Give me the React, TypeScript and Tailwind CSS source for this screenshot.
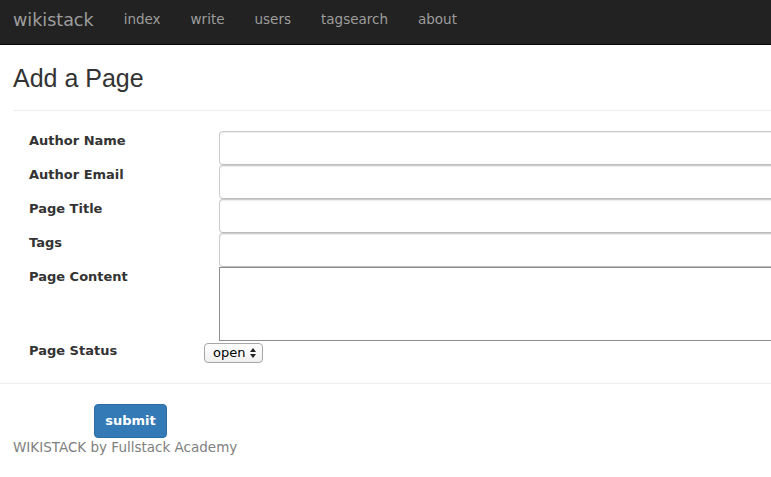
import React from "react";

const fields = ["Author Name", "Author Email", "Page Title", "Tags"];

export default function App() {
  const ui = { fontFamily: '"DejaVu Sans", "Lucida Grande", sans-serif' };
  return (
    <div className="w-[771px] h-[477px] overflow-hidden bg-white" style={ui}>
      {/* navbar */}
      <nav className="h-[45px] bg-[#222222] border-b border-[#080808] flex items-start pt-[7px] text-[#9d9d9d]">
        <span className="ml-[13px] text-[17.5px] mr-[30px]">wikistack</span>
        <div className="flex gap-[30px] text-[13.5px] pt-[2px]">
          <span>index</span>
          <span>write</span>
          <span>users</span>
          <span>tagsearch</span>
          <span>about</span>
        </div>
      </nav>

      <div className="pl-[13px]">
        <h1
          className="text-[25px] text-[#333] pt-[19px] pb-[18px] border-b border-[#eeeeee] leading-[28px]"
          style={{ fontFamily: '"Liberation Sans", Arial, sans-serif' }}
        >
          Add a Page
        </h1>

        <form className="pt-[20px]">
          {fields.map((f) => (
            <div key={f} className="flex h-[34px]">
              <label className="w-[206px] shrink-0 pl-[16px] text-[13px] font-bold text-[#333]">{f}</label>
              <input className="w-[700px] shrink-0 h-[34px] border border-[#cccccc] border-b-[#bdbdbd] rounded-l-[4px] shadow-[inset_0_1px_1px_rgba(0,0,0,0.075)]" />
            </div>
          ))}
          <div className="flex h-[74px]">
            <label className="w-[206px] shrink-0 pl-[16px] text-[13px] font-bold text-[#333]">Page Content</label>
            <textarea className="w-[700px] shrink-0 h-[74px] border border-[#8e8e8e] resize-none" />
          </div>
          <div className="flex items-center h-[22px] mt-[1px]">
            <label className="w-[191px] shrink-0 pl-[16px] pb-[4px] text-[13px] font-bold text-[#333]">Page Status</label>
            <div className="flex items-center h-[20px] w-[59px] border border-[#a6a6a6] rounded-[4px] bg-gradient-to-b from-white to-[#f0f0f0] pl-[8px] text-[13px] text-black">
              <span>open</span>
              <svg width="8" height="12" viewBox="0 0 8 12" className="ml-[4px]">
                <path d="M4 1 L7 5 L1 5 Z" fill="#222" />
                <path d="M4 11 L7 7 L1 7 Z" fill="#222" />
              </svg>
            </div>
          </div>
          <div className="border-b border-[#eeeeee] mt-[19px] -ml-[13px]" />
          <div className="pt-[20px] pl-[81px]">
            <button
              type="button"
              className="w-[73px] h-[34px] rounded-[4px] bg-[#337ab7] border border-[#2e6da4] text-white font-bold text-[13px]"
            >
              submit
            </button>
          </div>
        </form>
        <div className="text-[13.5px] text-[#808080] -mt-[1px]">WIKISTACK by Fullstack Academy</div>
      </div>
    </div>
  );
}
